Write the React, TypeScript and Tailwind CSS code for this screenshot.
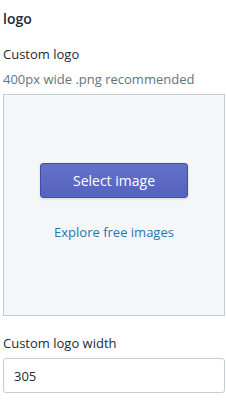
export default function App() {
  return (
    <div className="w-[226px] h-[408px] bg-white pl-[3px] pr-[1px] text-[#212b36] font-['Open_Sans',sans-serif]">
      <h2 className="pt-[9px] text-[14px] leading-[20px] font-semibold">logo</h2>
      <div className="mt-[15px] text-[13px] leading-[20px]">Custom logo</div>
      <div className="mt-[5px] text-[13px] leading-[20px] text-[#637381]">400px wide .png recommended</div>
      <div className="mt-[5px] h-[222px] border border-[#c4cdd5] bg-[#f4f6f8] flex flex-col items-center pt-[68px]">
        <button className="w-[148px] h-[35px] rounded-[3px] border border-[#3f4eae] bg-gradient-to-b from-[#6371c7] to-[#5563c1] text-white text-[14px] shadow-sm">
          Select image
        </button>
        <a className="mt-[24px] text-[13px] leading-[20px] text-[#2479ad]">Explore free images</a>
      </div>
      <div className="mt-[17px] text-[13px] leading-[20px]">Custom logo width</div>
      <input
        className="mt-[5px] w-full h-[35px] border border-[#c4cdd5] rounded-[3px] px-[10px] text-[13px] outline-none"
        defaultValue="305"
      />
    </div>
  );
}
